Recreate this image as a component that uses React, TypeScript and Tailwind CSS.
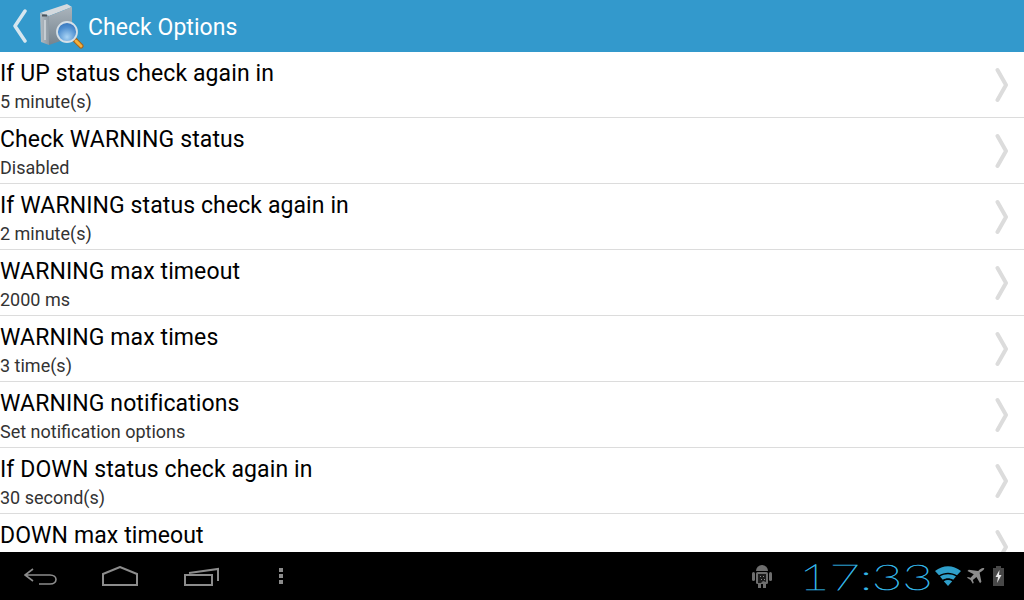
import React from 'react';

const rows = [
  { title: 'If UP status check again in', sub: '5 minute(s)' },
  { title: 'Check WARNING status', sub: 'Disabled' },
  { title: 'If WARNING status check again in', sub: '2 minute(s)' },
  { title: 'WARNING max timeout', sub: '2000 ms' },
  { title: 'WARNING max times', sub: '3 time(s)' },
  { title: 'WARNING notifications', sub: 'Set notification options' },
  { title: 'If DOWN status check again in', sub: '30 second(s)' },
  { title: 'DOWN max timeout', sub: '' },
];

const ServerIcon = () => (
  <svg width="46" height="46" viewBox="0 0 46 46" className="shrink-0">
    <defs>
      <linearGradient id="side" x1="0" y1="0" x2="1" y2="0">
        <stop offset="0" stopColor="#b4bdc4" />
        <stop offset="1" stopColor="#8d99a3" />
      </linearGradient>
      <linearGradient id="face" x1="0" y1="0" x2="0" y2="1">
        <stop offset="0" stopColor="#aab4bc" />
        <stop offset="1" stopColor="#75838e" />
      </linearGradient>
      <radialGradient id="lens" cx="0.5" cy="0.75" r="0.8">
        <stop offset="0" stopColor="#a9d4f5" />
        <stop offset="0.6" stopColor="#4f8fd0" />
        <stop offset="1" stopColor="#2f6db5" />
      </radialGradient>
    </defs>
    <path d="M2 10 L29 1 L34 4 L11 13 Z" fill="#d3d9de" />
    <path d="M2 10 L11 13 L11 42 L3 39 Z" fill="url(#side)" />
    <path d="M11 13 L34 4 L34 34 L11 42 Z" fill="url(#face)" />
    <rect x="6.5" y="17" width="1" height="20" fill="#eef1f3" />
    <rect x="4" y="11.5" width="5" height="2" fill="#4a535a" />
    <path d="M37 37 L43 43" stroke="#a8621a" strokeWidth="5" strokeLinecap="round" />
    <path d="M38 38 L43 43" stroke="#f3b13c" strokeWidth="3" strokeLinecap="round" strokeDasharray="2 1" />
    <circle cx="29" cy="29" r="10" fill="url(#lens)" stroke="#d5e0e8" strokeWidth="1.8" />
  </svg>
);

const RowChevron = () => (
  <svg width="14" height="36" viewBox="0 0 14 36" className="shrink-0">
    <path d="M2.5 3 L11 18 L2.5 33" fill="none" stroke="#dcdcdc" strokeWidth="4" strokeLinecap="round" strokeLinejoin="round" />
  </svg>
);

const App: React.FC = () => {
  return (
    <div className="w-[1024px] h-[600px] flex flex-col overflow-hidden bg-white font-['Roboto',sans-serif]">
      <header className="h-[52px] shrink-0 bg-[#3399cc] flex items-center">
        <svg width="16" height="34" viewBox="0 0 16 34" className="ml-[12px] shrink-0">
          <path d="M13 2 L3 17 L13 32" fill="none" stroke="#d6e6ef" strokeWidth="3.5" strokeLinecap="round" strokeLinejoin="round" />
        </svg>
        <div className="ml-[10px]"><ServerIcon /></div>
        <h1 className="ml-[4px] mt-[2px] text-[23px] text-white leading-none tracking-[0.05px]">Check Options</h1>
      </header>

      <main className="flex-1 min-h-0 overflow-hidden">
        {rows.map((r) => (
          <div key={r.title} className="h-[66px] flex items-center justify-between border-b border-[#dcdcdc] pr-[15px]">
            <div className="h-[52px] pt-[1px]">
              <div className="text-[23px] leading-[28px] text-black tracking-[0.1px]">{r.title}</div>
              {r.sub && <div className="text-[18px] leading-[20px] mt-[4px] text-[#333333]">{r.sub}</div>}
            </div>
            <RowChevron />
          </div>
        ))}
      </main>

      <footer className="h-[48px] shrink-0 bg-black flex items-center relative">
        <div className="flex items-center ml-[24px] gap-[32px]">
          <svg width="34" height="20" viewBox="0 0 34 20">
            <path d="M9 3 L1 9 L9 15 M1 9 L26 9 C34 9 34 18 26 18 L15 18" fill="none" stroke="#8c8c8c" strokeWidth="1.6" />
          </svg>
          <svg width="36" height="20" viewBox="0 0 36 20" className="ml-[12px]">
            <path d="M1 8 L18 1 L35 8 L35 19 L1 19 Z" fill="none" stroke="#8c8c8c" strokeWidth="2" />
          </svg>
          <svg width="36" height="20" viewBox="0 0 36 20" className="ml-[14px]">
            <path d="M1 9 L28 9 L28 19 L1 19 Z" fill="none" stroke="#8c8c8c" strokeWidth="2" />
            <path d="M5 7 L34 3 L34 15" fill="none" stroke="#8c8c8c" strokeWidth="2" />
          </svg>
          <div className="ml-[27px] flex flex-col gap-[2px]">
            <span className="w-[4px] h-[4px] bg-[#8c8c8c]" />
            <span className="w-[4px] h-[4px] bg-[#8c8c8c]" />
            <span className="w-[4px] h-[4px] bg-[#8c8c8c]" />
          </div>
        </div>

        <div className="ml-auto flex items-center">
          <svg width="22" height="24" viewBox="0 0 22 24">
            <path d="M5 7 A6 6 0 0 1 17 7 Z" fill="#6e6e6e" />
            <rect x="5" y="8" width="12" height="12" rx="1.5" fill="#6e6e6e" />
            <rect x="1" y="8" width="3" height="9" rx="1.5" fill="#6e6e6e" />
            <rect x="18" y="8" width="3" height="9" rx="1.5" fill="#6e6e6e" />
            <rect x="7" y="20" width="3" height="4" fill="#6e6e6e" />
            <rect x="12" y="20" width="3" height="4" fill="#6e6e6e" />
            <path d="M7 10 H15 V18 L12 17 L10 19 H7 Z" fill="#1c1c1c" />
            <path d="M9 12 h1 v1 h-1 Z M12 12 h1 v1 h-1 Z M10 15 h1 v1 h-1 Z M13 15 h1 v1 h-1 Z" fill="#8c8c8c" />
          </svg>
          <div className="w-[131px] ml-[26px] text-[35px] leading-none font-thin text-[#33b5e5] [-webkit-text-stroke:0.5px_#33b5e5] origin-left scale-x-[1.5] whitespace-nowrap font-['Lato',sans-serif]">17:33</div>
          <svg width="26" height="20" viewBox="0 0 26 20" className="ml-[5px]">
            <path d="M13 20 L8.8 15.2 C11.5 13.6 14.5 13.6 17.2 15.2 Z" fill="#2f9fca" />
            <path d="M7.8 13.8 L5 10.6 C9.5 7.6 16.5 7.6 21 10.6 L18.2 13.8 C15 11.8 11 11.8 7.8 13.8 Z" fill="#2f9fca" />
            <path d="M4 9.2 L0 5 C8 -1.5 18 -1.5 26 5 L22 9.2 C16.5 5.8 9.5 5.8 4 9.2 Z" fill="#2f9fca" />
          </svg>
          <svg width="18" height="18" viewBox="0 0 20 18" className="ml-[6px]">
            <path d="M19 0.5 C17 -0.5 14.5 1.5 12.5 3.5 L2 2 L0.5 3.5 L7.5 7 L4 11 L1 10 L0 11 L4 13.5 L6.5 17.5 L7.5 16.5 L6.5 13.5 L10.5 10 L14.5 17 L16 15.5 L14 5.5 C17 3.5 20 1.5 19 0.5 Z" fill="#8c8c8c" />
          </svg>
          <svg width="11" height="20" viewBox="0 0 11 20" className="ml-[8px] mr-[20px]">
            <path d="M3 0 H8 V2 H11 V20 H0 V2 H3 Z" fill="#484848" />
            <path d="M6.5 4 L2.5 11 H5 L4 17 L8.5 9 H6 Z" fill="#e8e8e8" />
          </svg>
        </div>
      </footer>
    </div>
  );
};

export default App;
